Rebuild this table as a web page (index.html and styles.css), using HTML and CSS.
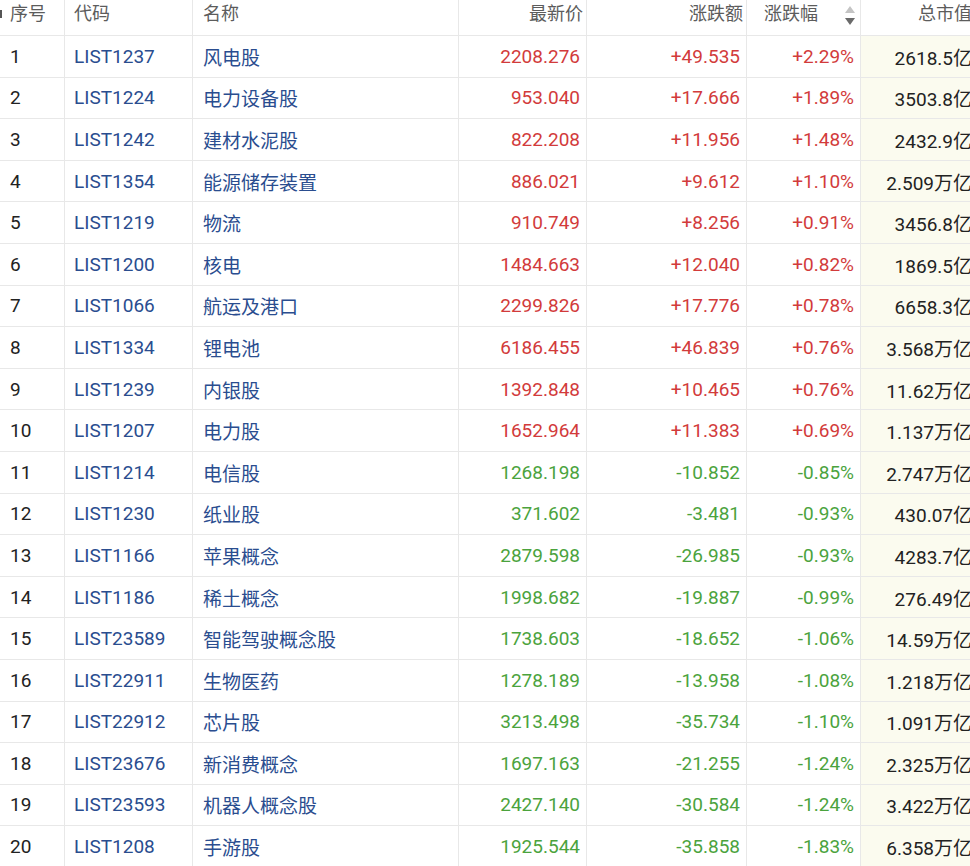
FILE: index.html
```html
<!DOCTYPE html>
<html lang="zh-CN">
<head>
<meta charset="utf-8">
<title>板块行情</title>
<link rel="stylesheet" href="styles.css">
</head>
<body>
<div class="viewport">
  <div class="table">
    <div class="row head">
      <div class="cell c0"><span class="cut"></span>序号</div>
      <div class="cell c1">代码</div>
      <div class="cell c2">名称</div>
      <div class="cell c3 r">最新价</div>
      <div class="cell c4 r">涨跌额</div>
      <div class="cell c5 sort"><span>涨跌幅</span><span class="arrows"><i class="up"></i><i class="down"></i></span></div>
      <div class="cell c6 r">总市值</div>
    </div>
    <div class="row up-row"><div class="cell c0">1</div><div class="cell c1 code">LIST1237</div><div class="cell c2 code">风电股</div><div class="cell c3 r">2208.276</div><div class="cell c4 r">+49.535</div><div class="cell c5 r">+2.29%</div><div class="cell c6 r">2618.5亿</div></div>
    <div class="row up-row"><div class="cell c0">2</div><div class="cell c1 code">LIST1224</div><div class="cell c2 code">电力设备股</div><div class="cell c3 r">953.040</div><div class="cell c4 r">+17.666</div><div class="cell c5 r">+1.89%</div><div class="cell c6 r">3503.8亿</div></div>
    <div class="row up-row"><div class="cell c0">3</div><div class="cell c1 code">LIST1242</div><div class="cell c2 code">建材水泥股</div><div class="cell c3 r">822.208</div><div class="cell c4 r">+11.956</div><div class="cell c5 r">+1.48%</div><div class="cell c6 r">2432.9亿</div></div>
    <div class="row up-row"><div class="cell c0">4</div><div class="cell c1 code">LIST1354</div><div class="cell c2 code">能源储存装置</div><div class="cell c3 r">886.021</div><div class="cell c4 r">+9.612</div><div class="cell c5 r">+1.10%</div><div class="cell c6 r">2.509万亿</div></div>
    <div class="row up-row"><div class="cell c0">5</div><div class="cell c1 code">LIST1219</div><div class="cell c2 code">物流</div><div class="cell c3 r">910.749</div><div class="cell c4 r">+8.256</div><div class="cell c5 r">+0.91%</div><div class="cell c6 r">3456.8亿</div></div>
    <div class="row up-row"><div class="cell c0">6</div><div class="cell c1 code">LIST1200</div><div class="cell c2 code">核电</div><div class="cell c3 r">1484.663</div><div class="cell c4 r">+12.040</div><div class="cell c5 r">+0.82%</div><div class="cell c6 r">1869.5亿</div></div>
    <div class="row up-row"><div class="cell c0">7</div><div class="cell c1 code">LIST1066</div><div class="cell c2 code">航运及港口</div><div class="cell c3 r">2299.826</div><div class="cell c4 r">+17.776</div><div class="cell c5 r">+0.78%</div><div class="cell c6 r">6658.3亿</div></div>
    <div class="row up-row"><div class="cell c0">8</div><div class="cell c1 code">LIST1334</div><div class="cell c2 code">锂电池</div><div class="cell c3 r">6186.455</div><div class="cell c4 r">+46.839</div><div class="cell c5 r">+0.76%</div><div class="cell c6 r">3.568万亿</div></div>
    <div class="row up-row"><div class="cell c0">9</div><div class="cell c1 code">LIST1239</div><div class="cell c2 code">内银股</div><div class="cell c3 r">1392.848</div><div class="cell c4 r">+10.465</div><div class="cell c5 r">+0.76%</div><div class="cell c6 r">11.62万亿</div></div>
    <div class="row up-row"><div class="cell c0">10</div><div class="cell c1 code">LIST1207</div><div class="cell c2 code">电力股</div><div class="cell c3 r">1652.964</div><div class="cell c4 r">+11.383</div><div class="cell c5 r">+0.69%</div><div class="cell c6 r">1.137万亿</div></div>
    <div class="row down-row"><div class="cell c0">11</div><div class="cell c1 code">LIST1214</div><div class="cell c2 code">电信股</div><div class="cell c3 r">1268.198</div><div class="cell c4 r">-10.852</div><div class="cell c5 r">-0.85%</div><div class="cell c6 r">2.747万亿</div></div>
    <div class="row down-row"><div class="cell c0">12</div><div class="cell c1 code">LIST1230</div><div class="cell c2 code">纸业股</div><div class="cell c3 r">371.602</div><div class="cell c4 r">-3.481</div><div class="cell c5 r">-0.93%</div><div class="cell c6 r">430.07亿</div></div>
    <div class="row down-row"><div class="cell c0">13</div><div class="cell c1 code">LIST1166</div><div class="cell c2 code">苹果概念</div><div class="cell c3 r">2879.598</div><div class="cell c4 r">-26.985</div><div class="cell c5 r">-0.93%</div><div class="cell c6 r">4283.7亿</div></div>
    <div class="row down-row"><div class="cell c0">14</div><div class="cell c1 code">LIST1186</div><div class="cell c2 code">稀土概念</div><div class="cell c3 r">1998.682</div><div class="cell c4 r">-19.887</div><div class="cell c5 r">-0.99%</div><div class="cell c6 r">276.49亿</div></div>
    <div class="row down-row"><div class="cell c0">15</div><div class="cell c1 code">LIST23589</div><div class="cell c2 code">智能驾驶概念股</div><div class="cell c3 r">1738.603</div><div class="cell c4 r">-18.652</div><div class="cell c5 r">-1.06%</div><div class="cell c6 r">14.59万亿</div></div>
    <div class="row down-row"><div class="cell c0">16</div><div class="cell c1 code">LIST22911</div><div class="cell c2 code">生物医药</div><div class="cell c3 r">1278.189</div><div class="cell c4 r">-13.958</div><div class="cell c5 r">-1.08%</div><div class="cell c6 r">1.218万亿</div></div>
    <div class="row down-row"><div class="cell c0">17</div><div class="cell c1 code">LIST22912</div><div class="cell c2 code">芯片股</div><div class="cell c3 r">3213.498</div><div class="cell c4 r">-35.734</div><div class="cell c5 r">-1.10%</div><div class="cell c6 r">1.091万亿</div></div>
    <div class="row down-row"><div class="cell c0">18</div><div class="cell c1 code">LIST23676</div><div class="cell c2 code">新消费概念</div><div class="cell c3 r">1697.163</div><div class="cell c4 r">-21.255</div><div class="cell c5 r">-1.24%</div><div class="cell c6 r">2.325万亿</div></div>
    <div class="row down-row"><div class="cell c0">19</div><div class="cell c1 code">LIST23593</div><div class="cell c2 code">机器人概念股</div><div class="cell c3 r">2427.140</div><div class="cell c4 r">-30.584</div><div class="cell c5 r">-1.24%</div><div class="cell c6 r">3.422万亿</div></div>
    <div class="row down-row"><div class="cell c0">20</div><div class="cell c1 code">LIST1208</div><div class="cell c2 code">手游股</div><div class="cell c3 r">1925.544</div><div class="cell c4 r">-35.858</div><div class="cell c5 r">-1.83%</div><div class="cell c6 r">6.358万亿</div></div>
  </div>
</div>
</body>
</html>
```
FILE: styles.css
```css
html, body {
  margin: 0;
  padding: 0;
  background: #ffffff;
}

.viewport {
  width: 970px;
  height: 866px;
  overflow: hidden;
}

.table {
  width: 1000px;
  font-family: Roboto, "Noto Sans CJK SC", sans-serif;
  font-size: 19px;
  color: #222222;
}

.row {
  display: grid;
  grid-template-columns: 65px 128px 266px 128px 160px 114px 140px;
  height: 41.6px;
  box-sizing: border-box;
  border-bottom: 1px solid #e8e8e8;
}

.row.head {
  height: 36px;
  font-size: 18px;
  color: #5c5c5c;
}

.cell {
  display: flex;
  align-items: center;
  box-sizing: border-box;
  border-right: 1px solid #e8e8e8;
  white-space: nowrap;
  overflow: hidden;
}

.head .cell {
  align-items: flex-start;
  padding-top: 2px;
  line-height: 24px;
}

.c0 { padding-left: 10px; position: relative; }
.c1 { padding-left: 9px; }
.c2 { padding-left: 10px; }
.r { justify-content: flex-end; padding-right: 6px; }
.head .r { padding-right: 3px; }

.c6 {
  border-right: none;
  background: #fbfbef;
  padding-right: 0;
}
.row .cell.c6.r { padding-right: 0; width: 111px; }
.head .c6 { background: #ffffff; }

.code { color: #2a4d8f; }

.up-row .c3, .up-row .c4, .up-row .c5 { color: #d23b3b; }
.down-row .c3, .down-row .c4, .down-row .c5 { color: #4ba33d; }

.sort {
  padding-left: 17px;
  padding-right: 5px;
  justify-content: space-between;
}

.arrows {
  display: flex;
  flex-direction: column;
  gap: 5px;
  padding-top: 4px;
}

.arrows i {
  display: block;
  width: 0;
  height: 0;
  border-left: 5px solid transparent;
  border-right: 5px solid transparent;
}
.arrows .up { border-bottom: 7px solid #c4c4c4; }
.arrows .down { border-top: 7px solid #6a6a6a; }

.cut {
  position: absolute;
  left: 0;
  top: 10px;
  width: 2px;
  height: 8px;
  background: #555555;
}
```
